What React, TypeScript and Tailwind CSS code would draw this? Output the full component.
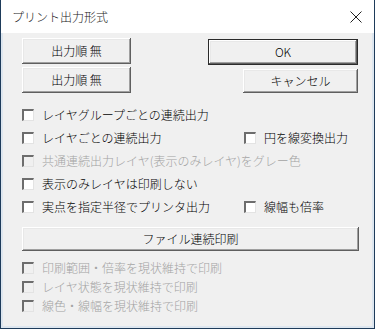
import React from 'react';

const font = { fontFamily: '"Noto Sans CJK JP", "Noto Sans", sans-serif' };

const btnBevel =
  'bg-[#f0f0f0] shadow-[inset_-1px_-1px_#5f5f5f,inset_1px_1px_#ffffff,inset_-2px_-2px_#a0a0a0,inset_2px_2px_#e8e8e8]';

const Btn: React.FC<{ label: string; className: string; isDefault?: boolean }> = ({
  label,
  className,
  isDefault
}) => (
  <button
    className={`${btnBevel} ${className} flex items-center justify-center text-[12px] font-light leading-none text-black ${
      isDefault ? 'border border-[#2b2b2b]' : ''
    }`}
  >
    {label}
  </button>
);

const Check: React.FC<{ label: string; disabled?: boolean; className?: string }> = ({
  label,
  disabled,
  className = ''
}) => (
  <label className={`flex items-center gap-[8px] ${className}`}>
    <span
      className={`w-[12px] h-[12px] shrink-0 border-t-2 border-l-2 border-t-[#6d6d6d] border-l-[#6d6d6d] border-b border-r border-b-[#e3e3e3] border-r-[#e3e3e3] ${
        disabled ? 'bg-[#f0f0f0]' : 'bg-white'
      }`}
    />
    <span
      className={`text-[12px] font-light leading-none whitespace-nowrap ${
        disabled ? 'text-[#a3a3a3]' : 'text-black'
      }`}
    >
      {label}
    </span>
  </label>
);

export default function App() {
  return (
    <div
      className="w-[375px] h-[329px] flex flex-col bg-white border-x border-b border-[#1e3b5a]"
      style={font}
    >
      {/* title bar */}
      <div className="h-[33px] shrink-0 flex items-center justify-between pl-[11px] pr-[11px] bg-white">
        <span className="text-[12px] font-light text-[#1a1a1a] leading-none">プリント出力形式</span>
        <svg width="12" height="12" viewBox="0 0 12 12" className="mr-[1px]">
          <path d="M0.5 0.5 L11.5 11.5 M11.5 0.5 L0.5 11.5" stroke="#222" strokeWidth="1" />
        </svg>
      </div>

      {/* client area */}
      <div className="flex-1 border-x-2 border-b-2 border-[#dde6ef] bg-[#f0f0f0] pl-[19px] pr-[14px] pt-[5px]">
        <div className="flex justify-between">
          <div className="flex flex-col gap-[3px]">
            <Btn label="出力順 無" className="w-[109px] h-[26px]" />
            <Btn label="出力順 無" className="w-[109px] h-[26px]" />
          </div>
          <div className="flex flex-col items-end pt-[1px] gap-[4px]">
            <Btn label="OK" className="w-[150px] h-[26px]" isDefault />
            <Btn label="キャンセル" className="w-[115px] h-[24px]" />
          </div>
        </div>

        <div className="mt-[10px] flex flex-col">
          <div className="h-[23px] flex items-center">
            <Check label="レイヤグループごとの連続出力" />
          </div>
          <div className="h-[23px] flex items-center">
            <Check label="レイヤごとの連続出力" className="w-[222px]" />
            <Check label="円を線変換出力" />
          </div>
          <div className="h-[23px] flex items-center">
            <Check label="共通連続出力レイヤ(表示のみレイヤ)をグレー色" disabled />
          </div>
          <div className="h-[23px] flex items-center">
            <Check label="表示のみレイヤは印刷しない" />
          </div>
          <div className="h-[23px] flex items-center">
            <Check label="実点を指定半径でプリンタ出力" className="w-[222px]" />
            <Check label="線幅も倍率" />
          </div>
        </div>

        <Btn label="ファイル連続印刷" className="mt-[9px] w-[337px] h-[24px]" />

        <div className="mt-[7px] flex flex-col">
          <div className="h-[19px] flex items-center">
            <Check label="印刷範囲・倍率を現状維持で印刷" disabled />
          </div>
          <div className="h-[19px] flex items-center">
            <Check label="レイヤ状態を現状維持で印刷" disabled />
          </div>
          <div className="h-[19px] flex items-center">
            <Check label="線色・線幅を現状維持で印刷" disabled />
          </div>
        </div>
      </div>
    </div>
  );
}
